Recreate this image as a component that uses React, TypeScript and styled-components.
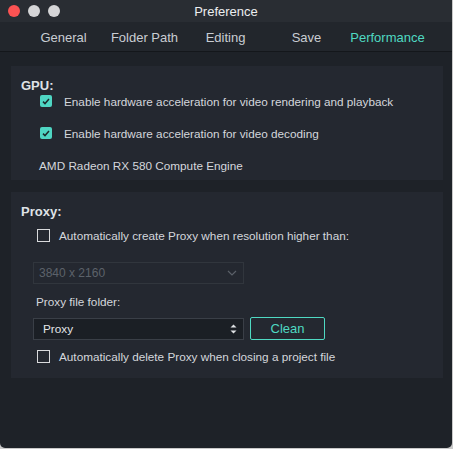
import React from "react";
import styled, { createGlobalStyle } from "styled-components";

const GlobalStyle = createGlobalStyle`
  html, body {
    margin: 0;
    padding: 0;
    background: #c9c9c9;
  }
  body {
    font-family: "Liberation Sans", Arial, sans-serif;
    -webkit-font-smoothing: antialiased;
  }
`;

const Window = styled.div`
  width: 452px;
  height: 448px;
  display: flex;
  flex-direction: column;
  background: #1e2228;
  border-radius: 0 0 5px 5px;
  overflow: hidden;
`;

const TitleBar = styled.div`
  height: 22px;
  display: grid;
  grid-template-columns: 1fr auto 1fr;
  align-items: center;
  background: #292d33;
  color: #eceef0;
  font-size: 13px;
`;

const Lights = styled.div`
  display: flex;
  gap: 8px;
  padding-left: 8px;
`;

const Light = styled.span<{ $color: string }>`
  width: 12px;
  height: 12px;
  border-radius: 50%;
  background: ${(p) => p.$color};
`;

const TabBar = styled.div`
  height: 29px;
  display: flex;
  align-items: center;
  padding-left: 23px;
  background: #22262c;
  border-bottom: 1px solid #14171b;
`;

const Tab = styled.div<{ $active?: boolean }>`
  width: 81px;
  text-align: center;
  font-size: 13px;
  padding-top: 2px;
  color: ${(p) => (p.$active ? "#4fd9c2" : "#c9cdd3")};
`;

const Content = styled.div`
  display: flex;
  flex-direction: column;
  gap: 12px;
  padding: 14px 9px 0 11px;
`;

const Panel = styled.section<{ $height: number }>`
  height: ${(p) => p.$height}px;
  box-sizing: border-box;
  background: #242830;
  padding: 13px 0 0 10px;
  display: flex;
  flex-direction: column;
`;

const PanelTitle = styled.div`
  font-size: 13px;
  line-height: 14px;
  height: 14px;
  font-weight: bold;
  color: #dfe2e6;
`;

const Row = styled.label<{ $top?: number; $indent?: number }>`
  display: flex;
  align-items: center;
  height: 16px;
  margin-top: ${(p) => p.$top ?? 0}px;
  margin-left: ${(p) => p.$indent ?? 0}px;
  font-size: 11.75px;
  color: #d4d7dc;
`;

const CheckBox = styled.span<{ $checked?: boolean }>`
  box-sizing: border-box;
  width: ${(p) => (p.$checked ? 12 : 13)}px;
  height: ${(p) => (p.$checked ? 12 : 13)}px;
  margin-right: ${(p) => (p.$checked ? 12 : 9)}px;
  display: flex;
  align-items: center;
  justify-content: center;
  background: ${(p) => (p.$checked ? "#4fd6c3" : "transparent")};
  border: ${(p) => (p.$checked ? "none" : "1.5px solid #d9dadc")};
  border-radius: ${(p) => (p.$checked ? 2 : 0)}px;
`;

const Text = styled.div<{ $top?: number; $indent?: number }>`
  height: 16px;
  line-height: 16px;
  margin-top: ${(p) => p.$top ?? 0}px;
  margin-left: ${(p) => p.$indent ?? 0}px;
  font-size: 11.75px;
  color: #d4d7dc;
`;

const Select = styled.div<{ $dim?: boolean; $top?: number }>`
  box-sizing: border-box;
  width: 211px;
  height: 22px;
  margin-top: ${(p) => p.$top ?? 0}px;
  display: flex;
  align-items: center;
  justify-content: space-between;
  padding: 0 6px 0 ${(p) => (p.$dim ? 5 : 9)}px;
  border: 1px solid ${(p) => (p.$dim ? "#31363d" : "#3a3f47")};
  background: ${(p) => (p.$dim ? "#242830" : "#1b1f25")};
  color: ${(p) => (p.$dim ? "#5c626a" : "#e3e5e8")};
  font-size: ${(p) => (p.$dim ? 12 : 11.75)}px;
`;

const SelectSlot = styled.div`
  margin-left: 12px;
`;

const FolderRow = styled.div`
  display: flex;
  align-items: center;
  gap: 6px;
  margin-top: 7px;
  margin-left: 12px;
`;

const CleanButton = styled.button`
  box-sizing: border-box;
  width: 75px;
  height: 23px;
  border: 1px solid #4fd9c2;
  border-radius: 2px;
  background: transparent;
  color: #4fd9c2;
  font-family: inherit;
  font-size: 13px;
  padding: 0;
`;

const Tick = () => (
  <svg width="8" height="7" viewBox="0 0 8 7">
    <path d="M1 3.6 L3 5.6 L7 1" fill="none" stroke="#1d2a2c" strokeWidth="1.5" />
  </svg>
);

const Chevron = () => (
  <svg width="10" height="6" viewBox="0 0 10 6">
    <path d="M1 1 L5 5 L9 1" fill="none" stroke="#5a6068" strokeWidth="1.2" />
  </svg>
);

const Stepper = () => (
  <svg width="7" height="12" viewBox="0 0 7 12">
    <path d="M0.5 4.5 L3.5 1.5 L6.5 4.5 Z" fill="#e0e2e5" />
    <path d="M0.5 7.5 L3.5 10.5 L6.5 7.5 Z" fill="#e0e2e5" />
  </svg>
);

const tabs = ["General", "Folder Path", "Editing", "Save", "Performance"];

export default function App() {
  return (
    <>
      <GlobalStyle />
      <Window>
        <TitleBar>
          <Lights>
            <Light $color="#fc5353" />
            <Light $color="#d5d5d7" />
            <Light $color="#d5d5d7" />
          </Lights>
          <span>Preference</span>
          <span />
        </TitleBar>
        <TabBar>
          {tabs.map((t) => (
            <Tab key={t} $active={t === "Performance"}>
              {t}
            </Tab>
          ))}
        </TabBar>
        <Content>
          <Panel $height={114}>
            <PanelTitle>GPU:</PanelTitle>
            <Row $indent={19}>
              <CheckBox $checked>
                <Tick />
              </CheckBox>
              Enable hardware acceleration for video rendering and playback
            </Row>
            <Row $top={16} $indent={19}>
              <CheckBox $checked>
                <Tick />
              </CheckBox>
              Enable hardware acceleration for video decoding
            </Row>
            <Text $top={17} $indent={18}>
              AMD Radeon RX 580 Compute Engine
            </Text>
          </Panel>
          <Panel $height={186}>
            <PanelTitle>Proxy:</PanelTitle>
            <Row $top={8} $indent={16}>
              <CheckBox />
              Automatically create Proxy when resolution higher than:
            </Row>
            <SelectSlot>
              <Select $dim $top={19}>
                3840 x 2160
                <Chevron />
              </Select>
            </SelectSlot>
            <Text $top={10} $indent={15}>
              Proxy file folder:
            </Text>
            <FolderRow>
              <Select>
                Proxy
                <Stepper />
              </Select>
              <CleanButton>Clean</CleanButton>
            </FolderRow>
            <Row $top={8} $indent={16}>
              <CheckBox />
              Automatically delete Proxy when closing a project file
            </Row>
          </Panel>
        </Content>
      </Window>
    </>
  );
}
